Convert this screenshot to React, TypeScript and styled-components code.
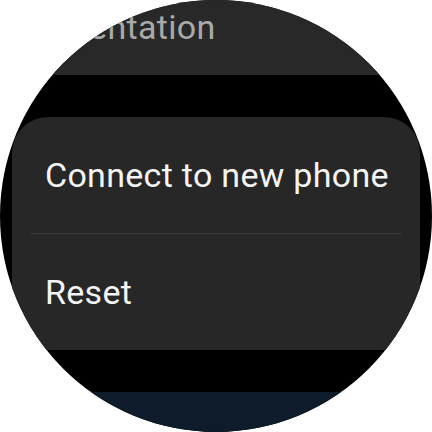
import React from "react";
import styled, { createGlobalStyle } from "styled-components";

const Global = createGlobalStyle`
  html, body { margin: 0; padding: 0; background: #ffffff; }
  body { font-family: Roboto, "Noto Sans", sans-serif; }
`;

const Watch = styled.div`
  width: 432px;
  height: 432px;
  border-radius: 50%;
  overflow: hidden;
  background: #000000;
`;

const List = styled.div`
  display: flex;
  flex-direction: column;
  gap: 42px;
  padding: 0 12px;
  margin-top: -41px;
`;

const Card = styled.div<{ $bg?: string }>`
  background: ${(p) => p.$bg ?? "#272727"};
  border-radius: 36px;
  display: flex;
  flex-direction: column;
  padding: 0 18px;
  min-height: 116px;
`;

const Row = styled.div<{ $dim?: boolean; $shift?: number }>`
  height: 116px;
  box-sizing: border-box;
  display: flex;
  align-items: center;
  padding: ${(p) => p.$shift ?? 0}px 15px 0;
  font-size: 34px;
  letter-spacing: 0.3px;
  white-space: nowrap;
  color: ${(p) => (p.$dim ? "#a9a9a9" : "#f4f4f4")};
`;

const Divider = styled.div`
  height: 1px;
  background: #3a3a3a;
`;

export default function App() {
  return (
    <>
      <Global />
      <Watch>
        <List>
          <Card $bg="#282828">
            <Row $dim $shift={20}>Orientation</Row>
          </Card>
          <Card>
            <Row>Connect to new phone</Row>
            <Divider />
            <Row>Reset</Row>
          </Card>
          <Card $bg="#0e1b2b" />
        </List>
      </Watch>
    </>
  );
}
